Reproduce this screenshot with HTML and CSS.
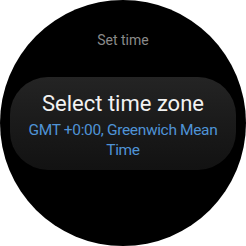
FILE: index.html
```html
<!DOCTYPE html>
<html>
<head>
<meta charset="utf-8">
<link rel="stylesheet" href="styles.css">
</head>
<body>
<div class="watch">
  <div class="title">Set time</div>
  <div class="pill">
    <div class="main">Select time zone</div>
    <div class="sub">GMT +0:00, Greenwich Mean Time</div>
  </div>
</div>
</body>
</html>
```
FILE: styles.css
```css
html, body {
  margin: 0;
  padding: 0;
  background: #ffffff;
}
.watch {
  width: 246px;
  height: 246px;
  border-radius: 50%;
  background: #000;
  overflow: hidden;
  display: flex;
  flex-direction: column;
  align-items: center;
  font-family: Roboto, "Open Sans", sans-serif;
}
.title {
  margin-top: 31px;
  font-size: 14px;
  line-height: 18px;
  color: #8a8a8a;
}
.pill {
  margin-top: 28px;
  width: 226px;
  height: 93px;
  box-sizing: border-box;
  border-radius: 38px;
  background: linear-gradient(180deg, #242424 0%, #1b1b1b 45%, #121212 100%);
  display: flex;
  flex-direction: column;
  align-items: center;
  padding-top: 13px;
}
.main {
  font-size: 22px;
  line-height: 28px;
  color: #f2f2f2;
}
.sub {
  margin-top: 2px;
  width: 216px;
  text-align: center;
  font-size: 15.5px;
  letter-spacing: -0.35px;
  line-height: 20px;
  color: #4f93d6;
}
```
